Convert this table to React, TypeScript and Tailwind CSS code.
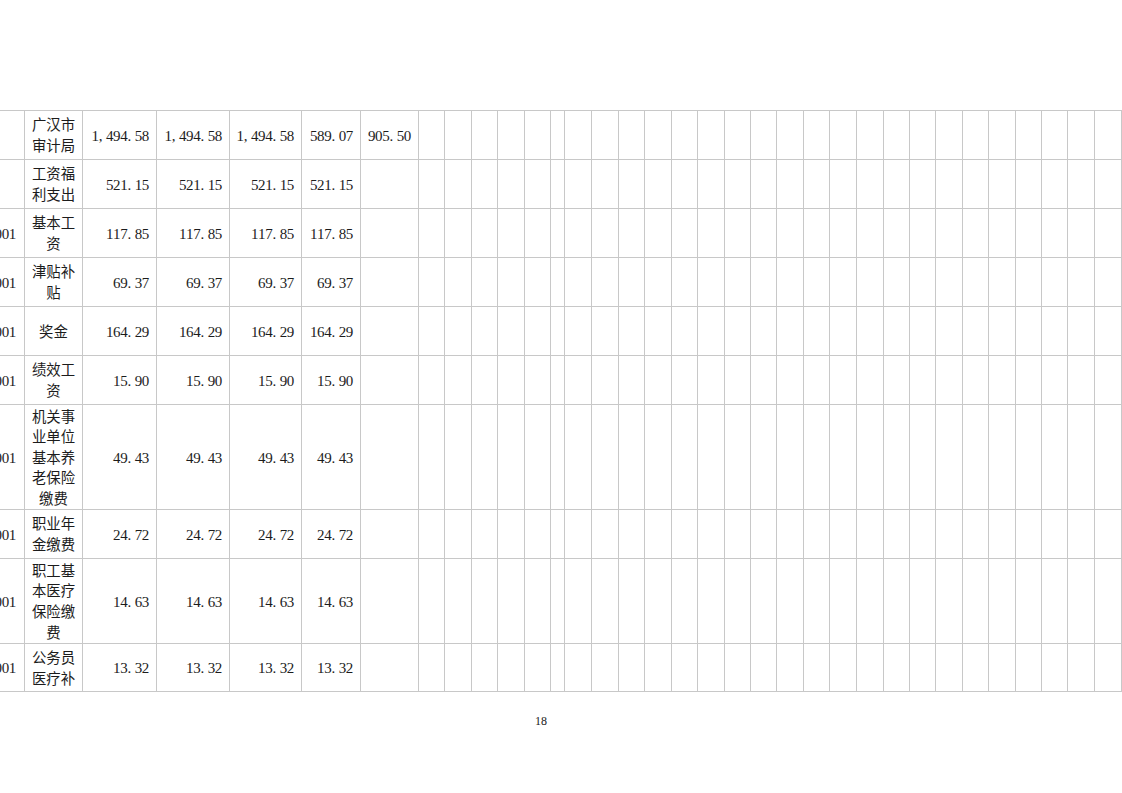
const serif = "font-['Liberation_Serif','Times_New_Roman',serif]";
const cjk = "font-['Noto_Sans_CJK_SC','Noto_Sans',sans-serif]";

// widths of the columns, left code column first (mostly off the page)
const colWidths = [
  "w-[60px]", "w-[58px]", "w-[74px]", "w-[73px]", "w-[72px]", "w-[59px]", "w-[58px]",
  "w-[26px]", "w-[27px]", "w-[26px]", "w-[27px]", "w-[26px]", "w-[14px]", "w-[27px]",
  "w-[27px]", "w-[26px]", "w-[27px]", "w-[26px]", "w-[27px]", "w-[26px]", "w-[26px]",
  "w-[27px]", "w-[26px]", "w-[27px]", "w-[27px]", "w-[26px]", "w-[26px]", "w-[27px]",
  "w-[26px]", "w-[27px]", "w-[26px]", "w-[26px]", "w-[27px]", "w-[27px]",
];

type Row = {
  code: string;
  name: string;
  values: Array<string>;
  height: string;
};

const rows: Array<Row> = [
  { code: "", name: "广汉市审计局", values: ["1,494.58", "1,494.58", "1,494.58", "589.07", "905.50"], height: "h-[49px]" },
  { code: "", name: "工资福利支出", values: ["521.15", "521.15", "521.15", "521.15", ""], height: "h-[49px]" },
  { code: "513001", name: "基本工资", values: ["117.85", "117.85", "117.85", "117.85", ""], height: "h-[49px]" },
  { code: "513001", name: "津贴补贴", values: ["69.37", "69.37", "69.37", "69.37", ""], height: "h-[49px]" },
  { code: "513001", name: "奖金", values: ["164.29", "164.29", "164.29", "164.29", ""], height: "h-[49px]" },
  { code: "513001", name: "绩效工资", values: ["15.90", "15.90", "15.90", "15.90", ""], height: "h-[49px]" },
  { code: "513001", name: "机关事业单位基本养老保险缴费", values: ["49.43", "49.43", "49.43", "49.43", ""], height: "h-[105px]" },
  { code: "513001", name: "职业年金缴费", values: ["24.72", "24.72", "24.72", "24.72", ""], height: "h-[49px]" },
  { code: "513001", name: "职工基本医疗保险缴费", values: ["14.63", "14.63", "14.63", "14.63", ""], height: "h-[85px]" },
  { code: "513001", name: "公务员医疗补", values: ["13.32", "13.32", "13.32", "13.32", ""], height: "h-[48px]" },
];

const emptyCols = colWidths.length - 7;

// half-width figures, every character takes the same cell like in the printed form
const Num = ({ v }: { v: string }) => (
  <span className={`${serif} text-[15px] whitespace-nowrap`}>
    {v.split("").map((ch, i) => (
      <span
        key={i}
        className={
          ch === "," || ch === "."
            ? "inline-block w-[7.2px] text-left"
            : "inline-block w-[7.2px] text-center"
        }
      >
        {ch}
      </span>
    ))}
  </span>
);

const cell = "border border-[#c8c8c8] p-0 align-middle";

export default function App() {
  return (
    <div className="min-h-[793px] w-[1122px] bg-white text-[#1c1c1c]">
      <div className="h-[110px]" />
      <div className="w-full overflow-hidden">
        <table className="ml-[-36px] w-[1157px] table-fixed border-collapse">
          <colgroup>
            {colWidths.map((w, i) => (
              <col key={i} className={w} />
            ))}
          </colgroup>
          <tbody>
            {rows.map((row) => (
              <tr key={row.name}>
                <td className={`${cell} ${row.height} pr-[8px] text-right`}>
                  {row.code && <Num v={row.code} />}
                </td>
                <td className={`${cell} px-[4px] text-center`}>
                  <div className={`${cjk} text-[14.4px] leading-[20.6px]`}>
                    {row.name}
                  </div>
                </td>
                {row.values.map((v, i) => (
                  <td key={i} className={`${cell} pr-[7px] text-right`}>
                    {v && <Num v={v} />}
                  </td>
                ))}
                {Array.from({ length: emptyCols }).map((_, i) => (
                  <td key={`e${i}`} className={cell} />
                ))}
              </tr>
            ))}
          </tbody>
        </table>
      </div>
      <div className={`${serif} mt-[22px] pl-[535px] text-[12px] leading-[14px] text-[#222]`}>
        18
      </div>
    </div>
  );
}
